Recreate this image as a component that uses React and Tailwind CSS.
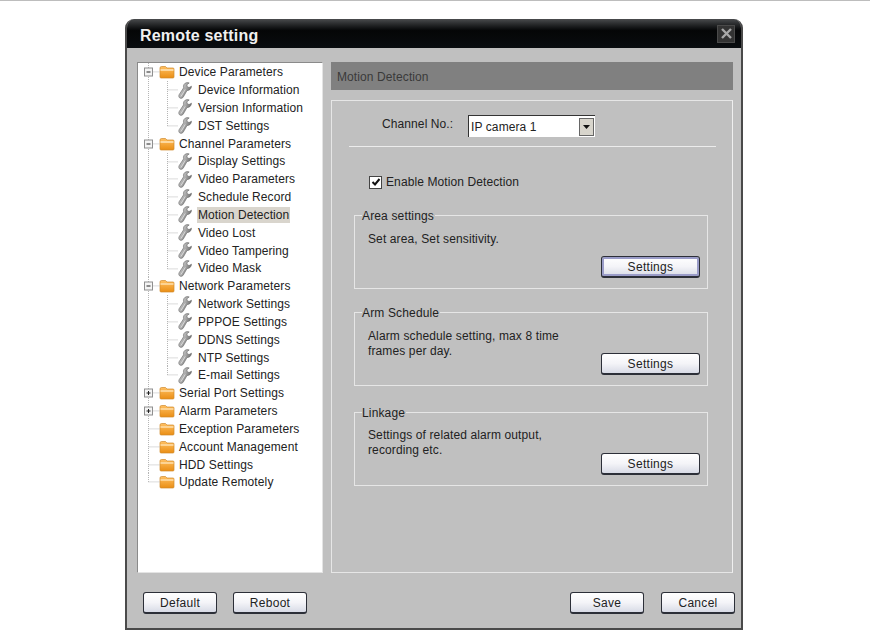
import React from "react";

const tree = [
  { l: 0, t: "Device Parameters", open: true },
  { l: 1, t: "Device Information" },
  { l: 1, t: "Version Information" },
  { l: 1, t: "DST Settings", last: true },
  { l: 0, t: "Channel Parameters", open: true },
  { l: 1, t: "Display Settings" },
  { l: 1, t: "Video Parameters" },
  { l: 1, t: "Schedule Record" },
  { l: 1, t: "Motion Detection", sel: true },
  { l: 1, t: "Video Lost" },
  { l: 1, t: "Video Tampering" },
  { l: 1, t: "Video Mask", last: true },
  { l: 0, t: "Network Parameters", open: true },
  { l: 1, t: "Network Settings" },
  { l: 1, t: "PPPOE Settings" },
  { l: 1, t: "DDNS Settings" },
  { l: 1, t: "NTP Settings" },
  { l: 1, t: "E-mail Settings", last: true },
  { l: 0, t: "Serial Port Settings", closed: true },
  { l: 0, t: "Alarm Parameters", closed: true },
  { l: 0, t: "Exception Parameters" },
  { l: 0, t: "Account Management" },
  { l: 0, t: "HDD Settings" },
  { l: 0, t: "Update Remotely", end: true },
];

function Folder() {
  return (
    <svg width="16" height="14" viewBox="0 0 16 14" className="shrink-0">
      <defs>
        <linearGradient id="fold" x1="0" y1="0" x2="0" y2="1">
          <stop offset="0" stopColor="#ffc062" />
          <stop offset="1" stopColor="#ea8e14" />
        </linearGradient>
      </defs>
      <path d="M1 3 Q1 1.5 2.5 1.5 H6.5 L8 3 H14 Q15 3 15 4 V12 Q15 13 14 13 H2 Q1 13 1 12 Z" fill="url(#fold)" stroke="#d08a2c" strokeWidth="0.7" />
      <path d="M1.5 5 H14.5" stroke="#ffe6bb" strokeWidth="1.3" />
    </svg>
  );
}

function Wrench() {
  return (
    <svg width="14" height="17" viewBox="0 0 14 17" className="shrink-0">
      <defs>
        <linearGradient id="wr" x1="0" y1="0" x2="1" y2="0.6">
          <stop offset="0" stopColor="#e4e4e4" />
          <stop offset="0.55" stopColor="#a8a8a8" />
          <stop offset="1" stopColor="#5e5e5e" />
        </linearGradient>
      </defs>
      <path d="M8.2 0.8 C6 1.4 5 3.6 5.6 5.8 L1.2 12.6 C0.4 14 0.8 15.6 2.2 16.2 C3.5 16.7 4.7 16 5.3 15 L9 8.6 C11.4 8.6 13.4 6.8 13.5 4.2 L11 5.6 L9 4.4 L9 2.6 L11.2 1 C10.2 0.5 9.2 0.5 8.2 0.8 Z" fill="url(#wr)" stroke="#666" strokeWidth="0.6" />
      <path d="M3 14.5 L7.3 7.4" stroke="#f5f5f5" strokeWidth="0.9" opacity="0.7" />
    </svg>
  );
}

function Guides({ row }) {
  const mid = 8.9;
  const dot = { stroke: "#b5b5b5", strokeWidth: 1, strokeDasharray: "1 1" };
  const isZero = row.l === 0;
  return (
    <svg width="60" height="18" className="absolute left-0 top-0 overflow-visible" aria-hidden="true">
      <line x1="10.5" y1="0" x2="10.5" y2={row.end ? mid : 18} {...dot} />
      {isZero && <line x1="10.5" y1={mid} x2="22" y2={mid} {...dot} />}
      {row.l === 1 && (
        <>
          <line x1="29.5" y1="0" x2="29.5" y2={row.last ? mid : 18} {...dot} />
          <line x1="29.5" y1={mid} x2="40" y2={mid} {...dot} />
        </>
      )}
      {(row.open || row.closed) && (
        <>
          <rect x="6.5" y="5" width="8" height="8" fill="#f4f4f4" stroke="#8f8f8f" strokeWidth="1" />
          <line x1="8.5" y1="9" x2="12.5" y2="9" stroke="#222" strokeWidth="1" />
          {row.closed && <line x1="10.5" y1="7" x2="10.5" y2="11" stroke="#222" strokeWidth="1" />}
        </>
      )}
    </svg>
  );
}

function TreeRow({ row }) {
  return (
    <div className="relative flex h-[17.83px] items-center">
      <Guides row={row} />
      {row.l === 0 ? (
        <div className="ml-[21px] flex items-center">
          <Folder />
          <span className="ml-[4px] text-[12px] tracking-[0.12px] text-[#222]">{row.t}</span>
        </div>
      ) : (
        <div className="ml-[40px] flex items-center">
          <Wrench />
          <span className={`ml-[5px] px-[1px] text-[12px] leading-[16px] tracking-[0.08px] text-[#222] ${row.sel ? "bg-[#d9d5cd]" : ""}`}>{row.t}</span>
        </div>
      )}
    </div>
  );
}

function Btn({ w, children, active }) {
  return (
    <button
      className={`flex h-[22px] items-center justify-center rounded-[3px] border border-[#2c2f38] border-b-2 bg-gradient-to-b from-[#ffffff] via-[#f4f4f8] to-[#d8dbe6] text-[12px] tracking-[0.3px] text-[#222] ${w} ${active ? "shadow-[inset_0_0_0_2px_#9a9cc8]" : ""}`}
    >
      {children}
    </button>
  );
}

function Group({ title, lines, mt, textPt }) {
  return (
    <div className={`relative ml-[22px] mr-[24px] h-[74px] border border-[#e6e6e6] ${mt}`}>
      <span className="absolute left-[7px] top-[-8px] bg-[#c0c0c0] pr-[1px] text-[12px] leading-[16px] tracking-[0.15px] text-[#222]">{title.t}</span>
      <div className={`pl-[13px] ${textPt} text-[12px] leading-[15px] tracking-[0.12px] text-[#222]`}>
        {lines.map((x) => (
          <div key={x}>{x}</div>
        ))}
      </div>
      <div className="absolute bottom-[10px] right-[7px]">
        <Btn w="w-[99px]" active={title.active}>Settings</Btn>
      </div>
    </div>
  );
}

export default function App() {
  return (
    <div className="h-[630px] w-[870px] overflow-hidden bg-white font-['Liberation_Sans',Arial,sans-serif]">
      <div className="h-px bg-[#bdbdbd]" />
      <div className="ml-[125px] mt-[18px] flex h-[611px] w-[618px] flex-col overflow-hidden rounded-t-[9px] border-x-2 border-b-2 border-[#4a4a4a] bg-[#c0c0c0]">
        <div className="-mx-[2px] flex h-[29px] shrink-0 items-center justify-between bg-gradient-to-b from-[#4a4c4e] via-[#050607] via-40% to-[#0a0d10] pl-[15px] pr-[8px]">
          <span className="pt-[4px] text-[16px] font-bold tracking-[0.2px] text-[#f0f0f0]">Remote setting</span>
          <span className="flex h-[18px] w-[18px] items-center justify-center border border-[#4a4a4a] bg-[#333]">
            <svg width="13" height="13" viewBox="0 0 13 13">
              <path d="M2 2 L11 11 M11 2 L2 11" stroke="#a8a8a8" strokeWidth="2.4" />
            </svg>
          </span>
        </div>
        <div className="flex flex-1 gap-[8px] pl-[10px] pr-[8px] pt-[14px]">
          <div className="h-[511px] w-[186px] border border-[#e4e4e4] border-t-[#8a8a8a] border-l-[#8a8a8a] bg-white pt-[0.4px]">
            {tree.map((r) => (
              <TreeRow key={r.t} row={r} />
            ))}
          </div>
          <div className="flex h-[511px] w-[402px] flex-col">
            <div className="flex h-[28px] shrink-0 items-center bg-[#808080] pl-[6px] pt-[2px] text-[12px] tracking-[0.1px] text-[#3a3a3a]">Motion Detection</div>
            <div className="mt-[10px] flex-1 border border-[#e6e6e6] border-r-[#efefef]">
              <div className="flex h-[45px] items-start pl-[50px]">
                <span className="mt-[15px] w-[86px] text-[12px] leading-[16px] tracking-[0.1px] text-[#222]">Channel No.:</span>
                <div className="mt-[14px] flex h-[22px] w-[127px] items-center justify-between border-l border-t border-[#333] bg-white pl-[2px] pr-[1px] text-[12px] tracking-[0.1px] text-[#222]">
                  <span>IP camera 1</span>
                  <span className="flex h-[18px] w-[15px] items-center justify-center border border-[#666] bg-[#d8d5cc]">
                    <svg width="7" height="4" viewBox="0 0 7 4"><path d="M0 0 H7 L3.5 4 Z" fill="#111" /></svg>
                  </span>
                </div>
              </div>
              <div className="ml-[17px] mr-[16px] h-px bg-[#ececec]" />
              <div className="ml-[37px] mt-[27px] flex h-[16px] items-center">
                <span className="flex h-[13px] w-[13px] items-center justify-center border border-[#444] bg-white">
                  <svg width="10" height="10" viewBox="0 0 10 10"><path d="M1.5 5 L4 7.5 L8.5 2" fill="none" stroke="#111" strokeWidth="2" /></svg>
                </span>
                <span className="ml-[4px] text-[12px] tracking-[0.1px] text-[#222]">Enable Motion Detection</span>
              </div>
              <Group mt="mt-[25px]" textPt="pt-[16px]" title={{ t: "Area settings", active: true }} lines={["Set area, Set sensitivity."]} />
              <Group mt="mt-[23px]" textPt="pt-[16px]" title={{ t: "Arm Schedule" }} lines={["Alarm schedule setting, max 8 time", "frames per day."]} />
              <Group mt="mt-[26px]" textPt="pt-[15px]" title={{ t: "Linkage" }} lines={["Settings of related alarm output,", "recording etc."]} />
            </div>
          </div>
        </div>
        <div className="flex h-[36px] shrink-0 items-start justify-between pl-[16px] pr-[6px]">
          <div className="flex gap-[16px]">
            <Btn w="w-[74px]">Default</Btn>
            <Btn w="w-[74px]">Reboot</Btn>
          </div>
          <div className="flex gap-[17px]">
            <Btn w="w-[74px]">Save</Btn>
            <Btn w="w-[74px]">Cancel</Btn>
          </div>
        </div>
      </div>
    </div>
  );
}
